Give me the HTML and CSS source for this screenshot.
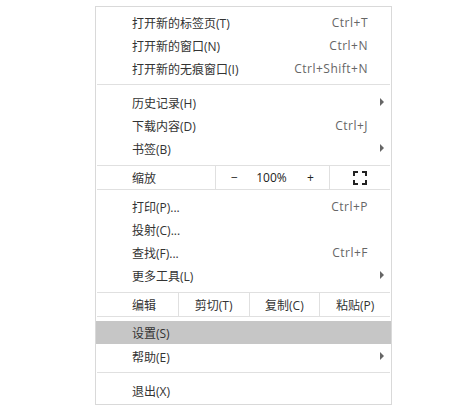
FILE: index.html
```html
<!DOCTYPE html>
<html lang="zh-CN">
  <head>
    <meta charset="UTF-8" />
    <title>Chrome Menu</title>
    <link rel="stylesheet" href="styles.css">
  </head>
  <body>
    <div class="menu">
      <div class="group first">
        <div class="item"><span>打开新的标签页(T)</span><span class="key">Ctrl+T</span></div>
        <div class="item"><span>打开新的窗口(N)</span><span class="key">Ctrl+N</span></div>
        <div class="item"><span>打开新的无痕窗口(I)</span><span class="key">Ctrl+Shift+N</span></div>
      </div>
      <div class="group second">
        <div class="item"><span>历史记录(H)</span><i class="arrow"></i></div>
        <div class="item"><span>下载内容(D)</span><span class="key">Ctrl+J</span></div>
        <div class="item"><span>书签(B)</span><i class="arrow"></i></div>
      </div>
      <div class="cells">
        <div class="cell label">缩放</div>
        <div class="cell zoom"><span>−</span><span>100%</span><span>+</span></div>
        <div class="cell full">
          <svg width="14" height="14" viewBox="0 0 14 14" fill="none" stroke="#222" stroke-width="2">
            <path d="M1 5V1H5M9 1H13V5M13 9V13H9M5 13H1V9" />
          </svg>
        </div>
      </div>
      <div class="group third">
        <div class="item"><span>打印(P)...</span><span class="key">Ctrl+P</span></div>
        <div class="item"><span>投射(C)...</span></div>
        <div class="item"><span>查找(F)...</span><span class="key">Ctrl+F</span></div>
        <div class="item"><span>更多工具(L)</span><i class="arrow"></i></div>
      </div>
      <div class="cells">
        <div class="cell label edit">编辑</div>
        <div class="cell action">剪切(T)</div>
        <div class="cell action">复制(C)</div>
        <div class="cell action">粘贴(P)</div>
      </div>
      <div class="group fourth">
        <div class="item active"><span>设置(S)</span></div>
        <div class="item help"><span>帮助(E)</span><i class="arrow"></i></div>
      </div>
      <div class="group last">
        <div class="item"><span>退出(X)</span></div>
      </div>
    </div>
  </body>
</html>
```

FILE: styles.css
```css
* {
  margin: 0;
  padding: 0;
  box-sizing: border-box;
}

body {
  font-family: "Open Sans", "Noto Sans CJK SC", sans-serif;
  font-size: 12px;
  color: #333;
  background: #fff;
  padding: 6px 0 0 95px;
}

.menu {
  width: 297px;
  height: 399px;
  border: 1px solid #d9d9d9;
  background: #fff;
  padding-top: 4px;
}

/* Groups of plain rows */
.group {
  border-bottom: 1px solid #e0e0e0;
  margin: 0 1px;
}

.first {
  padding-bottom: 4px;
}

.second {
  padding: 6px 0 5px;
}

.third {
  padding: 5px 0;
}

.fourth {
  padding: 4px 0;
}

.group.last {
  border-bottom: none;
  padding-top: 6px;
}

.item {
  height: 23px;
  display: flex;
  align-items: center;
  justify-content: space-between;
  padding: 0 23px 0 36px;
  margin: 0 -1px;
  position: relative;
}

.item.active {
  background: #c6c6c6;
  padding-top: 1px;
}

.item.help {
  margin-top: 1px;
}

.key {
  color: #666;
  letter-spacing: 0.5px;
}

.arrow {
  position: absolute;
  right: 7px;
  top: 7px;
  width: 0;
  height: 0;
  border-left: 4px solid #666;
  border-top: 4px solid transparent;
  border-bottom: 4px solid transparent;
}

/* Rows split into cells */
.cells {
  display: flex;
  height: 24px;
  margin: 0 1px;
  border-bottom: 1px solid #e0e0e0;
}

.cell {
  display: flex;
  align-items: center;
  justify-content: center;
  border-left: 1px solid #e0e0e0;
}

.label {
  width: 118px;
  border-left: none;
  justify-content: flex-start;
  padding-left: 35px;
}

.zoom {
  width: 114px;
  justify-content: space-between;
  padding: 0 15px;
  color: #222;
}

.zoom span:nth-child(2) {
  margin-left: -2px;
}

.full {
  flex: 1;
}

.label.edit {
  width: 81px;
}

.action {
  width: 71px;
}
```
